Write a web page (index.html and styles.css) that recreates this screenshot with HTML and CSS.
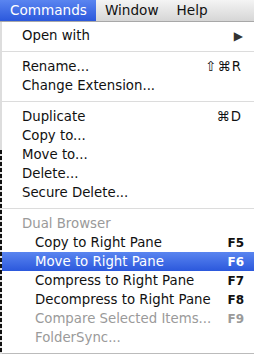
FILE: index.html
```html
<!DOCTYPE html>
<html lang="en">
<head>
    <meta charset="UTF-8">
    <title>Commands menu</title>
    <link rel="stylesheet" href="styles.css">
</head>
<body>
    <div class="menubar">
        <div class="title active">Commands</div>
        <div class="title">Window</div>
        <div class="title">Help</div>
    </div>

    <div class="screen">
        <div class="backdrop"></div>
        <div class="menu">
            <div class="item">
                <span>Open with</span>
                <span class="arrow">&#9654;</span>
            </div>
            <div class="sep"></div>
            <div class="item"><span>Rename...</span><span class="key">&#8679;&#8984;R</span></div>
            <div class="item"><span>Change Extension...</span></div>
            <div class="sep"></div>
            <div class="item"><span>Duplicate</span><span class="key">&#8984;D</span></div>
            <div class="item"><span>Copy to...</span></div>
            <div class="item"><span>Move to...</span></div>
            <div class="item"><span>Delete...</span></div>
            <div class="item"><span>Secure Delete...</span></div>
            <div class="sep"></div>
            <div class="item disabled"><span>Dual Browser</span></div>
            <div class="item sub"><span>Copy to Right Pane</span><span class="fkey">F5</span></div>
            <div class="item sub selected"><span>Move to Right Pane</span><span class="fkey">F6</span></div>
            <div class="item sub"><span>Compress to Right Pane</span><span class="fkey">F7</span></div>
            <div class="item sub"><span>Decompress to Right Pane</span><span class="fkey">F8</span></div>
            <div class="item sub disabled"><span>Compare Selected Items...</span><span class="fkey">F9</span></div>
            <div class="item sub disabled"><span>FolderSync...</span></div>
        </div>
    </div>
</body>
</html>
```

FILE: styles.css
```css
body {
    margin: 0;
    width: 254px;
    height: 354px;
    overflow: hidden;
    font-family: "DejaVu Sans", sans-serif;
    font-size: 13.3px;
    color: #111;
    background: #fff;
}
.menubar {
    display: flex;
    height: 21px;
    background: linear-gradient(#f4f4f4, #d6d6d6);
    border-bottom: 1px solid #a8a8a8;
}
.title {
    padding: 0 9px;
    line-height: 21px;
    font-size: 13.6px;
}
.title.active {
    color: #fff;
    background: linear-gradient(#5a85f0, #2b58dc);
    padding: 0 9px 0 10px;
}
.screen {
    display: flex;
    height: 332px;
}
.backdrop {
    width: 2px;
    flex-shrink: 0;
    background:
        repeating-linear-gradient(#111 0 4px, #ddd 4px 6px) 0 128px / 2px 100% no-repeat,
        #ddd;
}
.menu {
    flex: 1;
    padding-top: 4px;
    background: rgba(255,255,255,0.97);
    border-bottom: 1px solid #bbb;
}
.item {
    display: flex;
    justify-content: space-between;
    align-items: center;
    height: 19px;
    padding: 0 10px 0 20px;
}
.item.sub { padding-left: 33px; }
.item.disabled { color: #9a9a9a; }
.item.selected {
    color: #fff;
    background: linear-gradient(#5a85f0, #2b58dc);
}
.key { letter-spacing: 1px; padding-right: 2px; }
.fkey {
    font-weight: bold;
    font-size: 12px;
}
.arrow {
    font-size: 12px;
    color: #333;
    padding-right: 1px;
}
.sep {
    height: 1px;
    background: #dcdcdc;
    margin: 6px 0 5px;
}
```
